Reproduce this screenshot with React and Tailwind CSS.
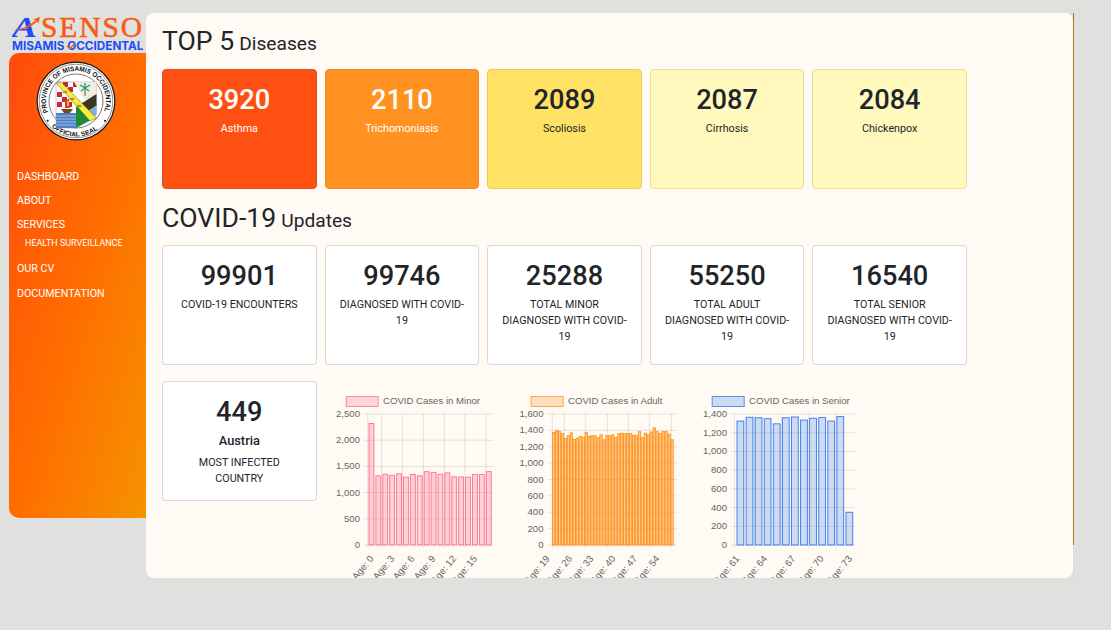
const minor = [2320,1320,1350,1330,1360,1295,1345,1320,1400,1385,1350,1375,1300,1300,1295,1345,1345,1400];
const adult = [1375,1400,1385,1360,1300,1335,1370,1290,1305,1325,1315,1375,1325,1335,1335,1310,1345,1285,1335,1335,1345,1315,1360,1365,1360,1360,1360,1340,1335,1385,1310,1365,1345,1380,1430,1385,1360,1385,1385,1355,1285];
const senior = [1325,1365,1360,1350,1295,1360,1368,1335,1355,1362,1325,1372,350];

const charts = [
  {
    title: "COVID Cases in Minor", data: minor, max: 2500, ticks: [2500,2000,1500,1000,500,0],
    left: 37.7, right: 163, first: 39, step: 6.9, bar: 4.9, tickEnd: 30,
    box: 15.7, textX: 53, lines: [51.7,72.7,93.3,114.3,135,156],
    labels: [[43.3,"Age: 0"],[64,"Age: 3"],[84,"Age: 6"],[105,"Age: 9"],[125.7,"Age: 12"],[146.7,"Age: 15"]],
    fill: "rgba(255,99,132,0.28)", stroke: "rgba(255,99,132,0.9)", box1: "rgba(255,99,132,0.25)", box2: "rgba(255,99,132,0.7)",
  },
  {
    title: "COVID Cases in Adult", data: adult, max: 1600, ticks: [1600,1400,1200,1000,800,600,400,200,0],
    left: 42.3, right: 166.7, first: 42.5, step: 2.96, bar: 2.3, tickEnd: 33.5,
    box: 20.7, textX: 58, lines: [54.3,75.3,97.3,118.3,139.3,161.3],
    labels: [[39.3,"Age: 19"],[61.7,"Age: 26"],[83,"Age: 33"],[105,"Age: 40"],[126.7,"Age: 47"],[149,"Age: 54"]],
    fill: "rgba(255,159,64,0.55)", stroke: "rgba(255,140,10,0.9)", box1: "rgba(255,159,64,0.3)", box2: "rgba(255,159,64,0.9)",
  },
  {
    title: "COVID Cases in Senior", data: senior, max: 1400, ticks: [1400,1200,1000,800,600,400,200,0],
    left: 44.7, right: 165, first: 47, step: 9.08, bar: 6.8, tickEnd: 37,
    box: 21.7, textX: 59, lines: [64.3,91.7,118.3,146],
    labels: [[49,"Age: 61"],[76.7,"Age: 64"],[105,"Age: 67"],[133.3,"Age: 70"],[161.7,"Age: 73"]],
    fill: "rgba(54,125,230,0.25)", stroke: "rgba(30,110,245,0.9)", box1: "rgba(54,125,230,0.25)", box2: "rgba(54,130,240,0.85)",
  },
];

function Chart({ c }) {
  const top = 29, bottom = 160;
  const y = (v) => bottom - (v / c.max) * (bottom - top);
  return (
    <svg width="180" height="200" viewBox="0 0 180 200" className="shrink-0 font-['Liberation_Sans',sans-serif] text-[9.6px]">
      <rect x={c.box + 0.5} y="11.5" width="32" height="10" fill={c.box1} stroke={c.box2} strokeWidth="1" />
      <text x={c.textX} y="19" fill="#666">{c.title}</text>
      {c.ticks.map((t) => (
        <g key={t}>
          <line x1={c.left - 4} x2={c.right} y1={y(t)} y2={y(t)} stroke="rgba(0,0,0,0.1)" />
          <text x={c.tickEnd} y={y(t) + 3} textAnchor="end" fill="#666">{t.toLocaleString("en-US")}</text>
        </g>
      ))}
      <line x1={c.left} x2={c.left} y1={top} y2={bottom + 3} stroke="rgba(0,0,0,0.1)" />
      {c.lines.map((x) => (
        <line key={x} x1={x} x2={x} y1={top} y2={bottom + 3} stroke="rgba(0,0,0,0.1)" />
      ))}
      {c.data.map((v, i) => (
        <rect key={i} x={c.first + i * c.step} y={y(v)} width={c.bar} height={bottom - y(v)} fill={c.fill} stroke={c.stroke} strokeWidth="0.9" />
      ))}
      {c.labels.map(([x, l]) => (
        <text key={l} x={x + 1} y={174} textAnchor="end" fill="#666" transform={`rotate(-50 ${x + 1} 174)`}>{l}</text>
      ))}
    </svg>
  );
}

function Logo() {
  return (
    <svg width="134" height="38" viewBox="0 0 134 38" className="block">
      <text x="0" y="21.5" fill="#1f4df5" fontFamily="'Liberation Serif',serif" fontSize="30" fontStyle="italic" fontWeight="700" textLength="25" lengthAdjust="spacingAndGlyphs">A</text>
      <path d="M0.5 15 C10 14.5 18 10 24 5 L20.5 4.5 L28 2 L26.5 8.5 L25 6.5 C19 12.5 10 16 0.5 15 Z" fill="#fb5a14" />
      <text x="29" y="21.5" fill="#fb5a14" stroke="#fb5a14" strokeWidth="0.5" fontFamily="'Liberation Serif',serif" fontSize="29.5" textLength="101" lengthAdjust="spacing">SENSO</text>
      <text x="0" y="34.5" fill="#1f4df5" fontFamily="Inter,sans-serif" fontSize="11.5" fontWeight="700" textLength="131.5" lengthAdjust="spacingAndGlyphs">MISAMIS OCCIDENTAL</text>
      <path d="M55 31 L58 33.5 L63 28.5" fill="none" stroke="#fb5a14" strokeWidth="1.5" />
    </svg>
  );
}

function Seal() {
  return (
    <svg width="80" height="80" viewBox="0 0 80 80" className="block">
      <defs>
        <path id="sealTop" d="M12.2 51.2 A30 30 0 1 1 67.8 51.2" />
        <path id="sealBottom" d="M15.7 65.7 A35.4 35.4 0 0 0 61 68.7" />
      </defs>
      <circle cx="40" cy="40" r="39.5" fill="#111" />
      <circle cx="40" cy="40" r="38.3" fill="#fff" />
      <circle cx="40" cy="40" r="36.8" fill="#fff" stroke="#222" strokeWidth="0.5" />
      <circle cx="40" cy="40" r="27" fill="#fff" stroke="#222" strokeWidth="0.6" />
      <text fontFamily="'Liberation Sans',sans-serif" fontSize="6.8" fontWeight="700" fill="#111">
        <textPath href="#sealTop" textLength="116" lengthAdjust="spacingAndGlyphs">PROVINCE OF MISAMIS OCCIDENTAL</textPath>
      </text>
      <text fontFamily="'Liberation Sans',sans-serif" fontSize="6.4" fontWeight="700" fill="#111">
        <textPath href="#sealBottom" textLength="50" lengthAdjust="spacingAndGlyphs">OFFICIAL SEAL</textPath>
      </text>
      <circle cx="11.7" cy="59.7" r="1" fill="#111" />
      <circle cx="69" cy="59.7" r="1" fill="#111" />
      <path d="M20 21 H60.5 V52 L40 67 H20 Z" fill="#fff" stroke="#a88" strokeWidth="0.5" />
      <g fill="#c9283a">
        <rect x="27" y="21" width="5" height="5" /><rect x="37" y="21" width="4" height="5" />
        <rect x="32" y="26" width="5" height="5" /><rect x="21" y="31" width="5" height="5" />
        <rect x="26" y="36" width="5" height="5" /><rect x="21" y="41" width="5" height="5" />
        <rect x="31" y="41" width="5" height="5" />
      </g>
      <path d="M38 21 H60.5 V42 L50 40 Z" fill="#f1ece0" />
      <path d="M43 44 L60.5 33 V45 L52 50 Z" fill="#3b3420" />
      <path d="M52 51 L60.5 44 V54 L55 58 Z" fill="#7db1dc" />
      <path d="M40 67 V46 L44 44 L58 56 L53 60 Z" fill="#1f8a35" />
      <path d="M20 52 H40 V67 H20 Z" fill="#4d7fc4" />
      <g stroke="#fff" strokeWidth="0.5"><path d="M20 55 H40 M20 58 H40 M20 61 H40 M20 64 H40" /></g>
      <path d="M25 48 L37 48 L34 52 H28 Z" fill="#7a4a1c" />
      <path d="M29 39 L33 38 L34 47 H29 Z" fill="#d9342b" />
      <path d="M31 40 L33 40 L33 45 L31 45 Z" fill="#f1c40f" />
      <path d="M20 22 L25 21 L60.5 57 L54 60 Z" fill="#f7ee3c" stroke="#333" strokeWidth="0.4" />
      <g fill="#c28a1f"><ellipse cx="29" cy="31" rx="2.5" ry="1.2" /><ellipse cx="36" cy="38" rx="2.5" ry="1.2" /><ellipse cx="43" cy="45" rx="2.5" ry="1.2" /></g>
      <path d="M49 35 V27" stroke="#6b5a2c" strokeWidth="1" />
      <path d="M49 27 L44 24 M49 27 L54 24 M49 27 L45 30 M49 27 L53 30 M49 27 L49 22" stroke="#1d9a6c" strokeWidth="1.3" />
    </svg>
  );
}

function Card({ num, label, sub, cls }) {
  return (
    <div className={`h-[120px] w-[154.6px] shrink-0 rounded-[4px] border px-[13px] pt-[13.5px] text-center ${cls}`}>
      <div className="text-[27.2px] leading-[33.6px] font-medium">{num}</div>
      {sub && <div className="mt-[1px] text-[12.8px] leading-[21px] font-medium">{sub}</div>}
      <div className="mt-[3.5px] text-[10.72px] leading-[16px]">{label}</div>
    </div>
  );
}

const white = "border-black/15 bg-white text-[#212529]";

export default function App() {
  return (
    <div className="flex h-[630px] w-[1111px] overflow-hidden bg-[#e0e0de] pl-[9px] font-['Roboto',sans-serif] text-[#212529]">
      <div className="flex w-[137px] shrink-0 flex-col pt-[15px]">
        <div className="ml-[3px] h-[38px]"><Logo /></div>
        <nav className="flex h-[465px] flex-col rounded-l-[10px] bg-linear-to-br from-[#ff4a0c] via-[#ff6c00] to-[#f59200] pt-[8px] text-[10.7px] leading-[24px] text-white">
          <div className="ml-[27px]"><Seal /></div>
          <div className="mt-[24px] pl-[8px]">
            <div>DASHBOARD</div>
            <div>ABOUT</div>
            <div>SERVICES</div>
            <div className="pl-[8px] text-[8.96px] leading-[13px]">HEALTH SURVEILLANCE</div>
            <div className="mt-[7px]">OUR CV</div>
            <div className="mt-[1px]">DOCUMENTATION</div>
          </div>
        </nav>
      </div>
      <div className="mt-[13px] flex h-[565px]">
        <main className="h-full w-[927px] overflow-hidden rounded-[8px] bg-[#fffaf3] pl-[16px]">
          <h1 className="mt-[11px] flex h-[34px] items-baseline gap-[5px] text-[26.6px] leading-[34px] font-normal">
            TOP 5 <span className="text-[19.2px]">Diseases</span>
          </h1>
          <div className="mt-[11px] flex w-[805px] justify-between">
            <Card num="3920" label="Asthma" cls="border-[#e0501f] bg-[#ff5014] text-white" />
            <Card num="2110" label="Trichomoniasis" cls="border-[#e98a2a] bg-[#ff9220] text-white" />
            <Card num="2089" label="Scoliosis" cls="border-[#ecc95a] bg-[#ffe164]" />
            <Card num="2087" label="Cirrhosis" cls="border-[#ecdf9c] bg-[#fff9bd]" />
            <Card num="2084" label="Chickenpox" cls="border-[#ecdf9c] bg-[#fff9bd]" />
          </div>
          <h1 className="mt-[11px] flex h-[35px] items-baseline gap-[5px] text-[26.6px] leading-[35px] font-normal">
            COVID-19 <span className="text-[19.2px]">Updates</span>
          </h1>
          <div className="mt-[10px] flex w-[805px] justify-between">
            <Card num="99901" label="COVID-19 ENCOUNTERS" cls={white} />
            <Card num="99746" label="DIAGNOSED WITH COVID-19" cls={white} />
            <Card num="25288" label="TOTAL MINOR DIAGNOSED WITH COVID-19" cls={white} />
            <Card num="55250" label="TOTAL ADULT DIAGNOSED WITH COVID-19" cls={white} />
            <Card num="16540" label="TOTAL SENIOR DIAGNOSED WITH COVID-19" cls={white} />
          </div>
          <div className="mt-[16px] flex">
            <Card num="449" sub="Austria" label="MOST INFECTED COUNTRY" cls={white} />
            <div className="ml-[13.4px] mt-[4px] flex">
              {charts.map((c) => <Chart key={c.title} c={c} />)}
            </div>
          </div>
        </main>
        <div className="flex w-px flex-col">
          <div className="h-[532px] bg-[#a8741e]" />
          <div className="h-[33px] bg-[#d8dfe0]" />
        </div>
      </div>
    </div>
  );
}
